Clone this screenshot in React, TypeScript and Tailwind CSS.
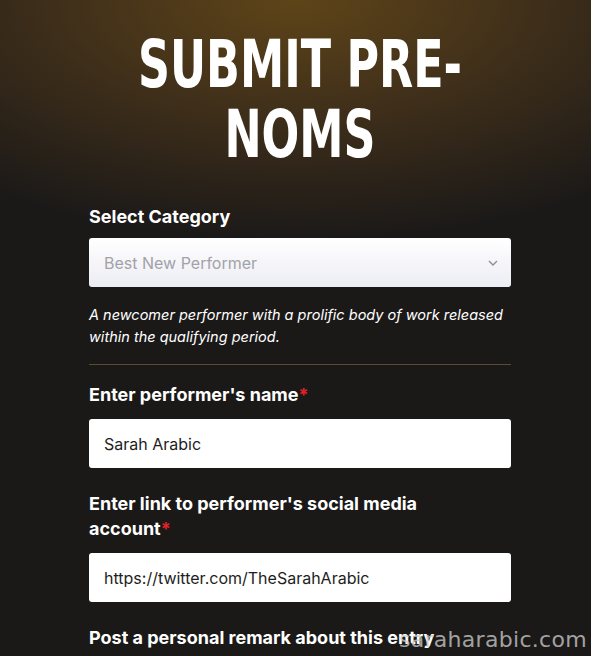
import { useState } from 'react';

export default function App() {
  const [name, setName] = useState('Sarah Arabic');
  const [link, setLink] = useState('https://twitter.com/TheSarahArabic');

  return (
    <div className="relative h-[656px] w-full overflow-hidden bg-[#1b1918] [font-family:Inter,'Open_Sans',sans-serif]">
      {/* glow behind title */}
      <div className="absolute inset-x-0 top-0 h-[240px] bg-[radial-gradient(ellipse_85%_100%_at_50%_0%,#5e4418_0%,#41301a_45%,#1b1918_100%)]" />

      <div className="relative ml-[89px] w-[422px] pt-[30px]">
        <h1 className="-mx-[80px] text-center text-[65px] font-bold uppercase leading-[70px] text-white [font-family:'DejaVu_Sans',sans-serif] [font-stretch:condensed]">
          <span className="block origin-center scale-x-[0.76] whitespace-nowrap">Submit Pre-</span>
          <span className="block origin-center scale-x-[0.76] whitespace-nowrap">Noms</span>
        </h1>

        <div className="mt-[35px]">
          <label className="block text-[18px] font-bold leading-[24px] text-white">Select Category</label>
          <div className="mt-[9px] flex h-[49px] items-center justify-between rounded-[3px] bg-gradient-to-b from-white to-[#ececf4] pl-[15px] pr-[13px]">
            <span className="text-[16px] text-[#a2a2a8]">Best New Performer</span>
            <svg width="10" height="6" viewBox="0 0 10 6" fill="none">
              <path d="M1 1l4 4 4-4" stroke="#8e8e96" strokeWidth="1.4" />
            </svg>
          </div>
          <p className="mt-[17px] text-[14.5px] italic leading-[22px] text-white">
            A newcomer performer with a prolific body of work released within the qualifying period.
          </p>
          <div className="mt-[16px] h-px bg-[#5a4a30]" />
        </div>

        <div className="mt-[18px]">
          <label className="block text-[18px] font-bold leading-[24px] text-white">
            Enter performer's name<span className="text-[#e0202a]">*</span>
          </label>
          <input
            value={name}
            onChange={(e) => setName(e.target.value)}
            className="mt-[12px] h-[49px] w-full rounded-[3px] bg-white px-[15px] text-[16px] text-[#1e1e22] outline-none"
          />
        </div>

        <div className="mt-[23px]">
          <label className="block pr-[60px] text-[18px] font-bold leading-[25px] text-white">
            Enter link to performer's social media account<span className="text-[#e0202a]">*</span>
          </label>
          <input
            value={link}
            onChange={(e) => setLink(e.target.value)}
            className="mt-[12px] h-[49px] w-full rounded-[3px] bg-white px-[15px] text-[16px] text-[#1e1e22] outline-none"
          />
        </div>

        <div className="mt-[23px]">
          <label className="block whitespace-nowrap text-[18px] font-bold leading-[25px] text-white">
            Post a personal remark about this entry
          </label>
        </div>
      </div>

      <div className="absolute bottom-[3px] right-[4px] text-[22px] leading-[26px] tracking-[0.3px] text-[#c8c8c8]/80 [font-family:'DejaVu_Sans',sans-serif]">
        saraharabic.com
      </div>
    </div>
  );
}
